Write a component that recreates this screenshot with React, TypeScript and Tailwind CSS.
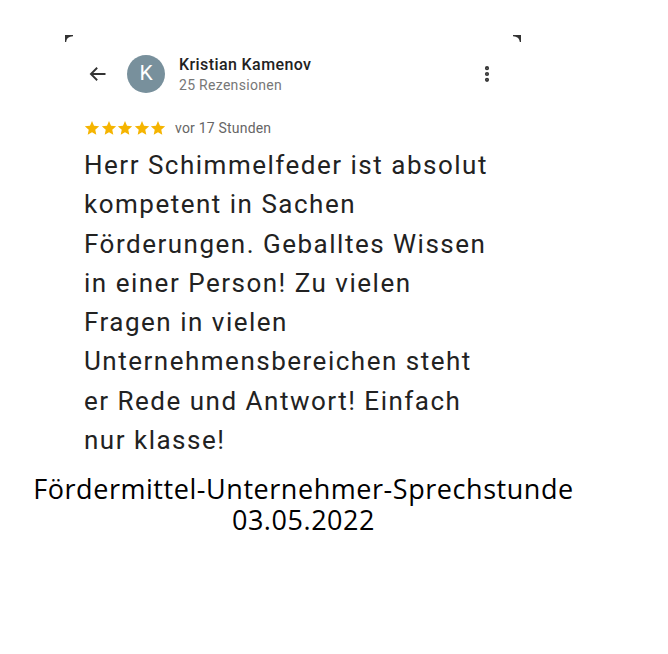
import { MoreVertical } from "lucide-react";

const Star = () => (
  <svg width="16" height="15" viewBox="0 0 24 23" className="fill-[#f5b400]">
    <path d="M12 0l3.09 7.26L23 8l-6 5.3L18.6 21 12 17.1 5.4 21 7 13.3 1 8l7.91-.74z" />
  </svg>
);

const Corner = ({ flip }: { flip?: boolean }) => (
  <svg width="8" height="8" viewBox="0 0 8 8" className={flip ? "-scale-x-100" : ""}>
    <path d="M0 0h8v1.2C4 1.4 1.6 3.2 1.2 7H0z" fill="#333" />
  </svg>
);

export default function App() {
  const lines = [
    "Herr Schimmelfeder ist absolut",
    "kompetent in Sachen",
    "Förderungen. Geballtes Wissen",
    "in einer Person! Zu vielen",
    "Fragen in vielen",
    "Unternehmensbereichen steht",
    "er Rede und Antwort! Einfach",
    "nur klasse!",
  ];

  return (
    <div className="w-[668px] h-[654px] bg-white">
      <div className="pt-[35px] pl-[65px]">
        <div className="w-[456px] flex justify-between">
          <Corner />
          <Corner flip />
        </div>
        <div className="w-[456px] font-['Roboto',sans-serif]">
          <div className="flex items-center h-[46px] mt-[8px]">
            <svg width="20" height="20" viewBox="0 0 24 24" className="ml-[23px]" fill="none" stroke="#333" strokeWidth="2.2">
              <path d="M21 12H3.5M11 4.5L3.5 12l7.5 7.5" />
            </svg>
            <div className="ml-[19px] w-[38px] h-[38px] rounded-full bg-[#78909c] flex items-center justify-center text-white text-[21px]">
              K
            </div>
            <div className="ml-[14px] flex flex-col flex-1 leading-tight pt-[2px]">
              <span className="text-[16px] font-medium tracking-[0.4px] text-[#222]">Kristian Kamenov</span>
              <span className="text-[14px] tracking-[0.3px] text-[#777] mt-[2px]">25 Rezensionen</span>
            </div>
            <MoreVertical size={20} strokeWidth={3} className="text-[#333] mr-[24px]" />
          </div>
          <div className="flex items-center mt-[21px] ml-[19px]">
            <div className="flex gap-[0.5px]">
              <Star />
              <Star />
              <Star />
              <Star />
              <Star />
            </div>
            <span className="ml-[9px] text-[14px] tracking-[0.2px] text-[#666]">vor 17 Stunden</span>
          </div>
          <div className="ml-[19px] mt-[7px] text-[26px] tracking-[1.5px] leading-[39.3px] text-[#222]">
            {lines.map((l) => (
              <div key={l}>{l}</div>
            ))}
          </div>
        </div>
      </div>
      <div className="w-[607px] text-center font-['Open_Sans',sans-serif] text-[27px] tracking-[0.55px] leading-[31px] text-black mt-[13px]">
        <div>Fördermittel-Unternehmer-Sprechstunde</div>
        <div>03.05.2022</div>
      </div>
    </div>
  );
}
